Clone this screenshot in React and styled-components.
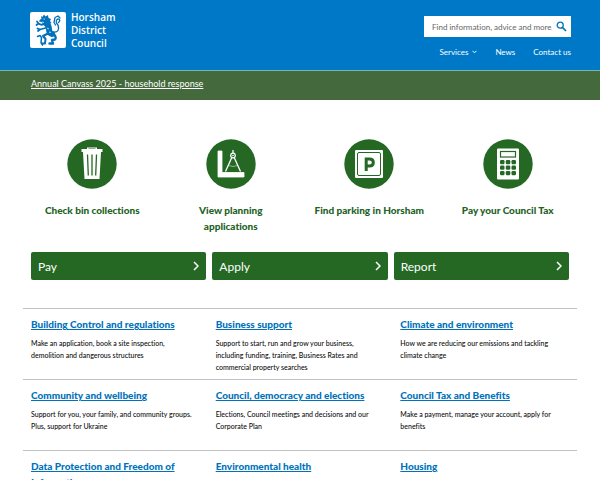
import React from "react";
import styled, { createGlobalStyle } from "styled-components";

const GlobalStyle = createGlobalStyle`
  * { box-sizing: border-box; }
  body {
    margin: 0;
    background: #fff;
    color: #0b0c0c;
    font-family: Lato, "Liberation Sans", sans-serif;
    font-size: 8px;
    line-height: 12px;
    font-variant-ligatures: none;
  }
  a { color: inherit; }
`;

const Header = styled.header`
  background: #0078c8;
  border-bottom: 1px solid #74b6b0;
`;

const HeaderInner = styled.div`
  display: flex;
  justify-content: space-between;
  padding: 11px 29px 12px 30px;
`;

const Logo = styled.a`
  display: flex;
  align-self: flex-start;
  gap: 5px;
  color: #fff;
  text-decoration: none;
  font: 600 10px/13px "Open Sans", "Noto Sans", sans-serif;
  svg { display: block; margin-top: 1px; }
  span { display: block; }
`;

const HeaderTools = styled.div`
  display: flex;
  flex-direction: column;
  align-items: flex-end;
  gap: 9px;
  padding-top: 5px;
`;

const Search = styled.form`
  display: flex;
  width: 147px;
  height: 21px;
  background: #fff;
`;

const SearchInput = styled.input`
  flex: 1;
  min-width: 0;
  padding: 0 0 0 8px;
  border: 0;
  background: transparent;
  font: inherit;
  color: #333;
  &::placeholder { color: #666; opacity: 1; }
`;

const SearchButton = styled.button`
  display: grid;
  place-items: center;
  width: 19px;
  padding: 0;
  border: 0;
  background: transparent;
  color: #0072bc;
`;

const Nav = styled.nav`
  display: flex;
  gap: 18px;
  color: #fff;
  a {
    display: flex;
    align-items: center;
    gap: 4px;
    text-decoration: none;
  }
`;

const Notice = styled.div`
  padding: 6px 31px 9px;
  background: #44693d;
  color: #fff;
  font-size: 9px;
  line-height: 14px;
`;

const Main = styled.main`
  padding: 39px 23px 0;
`;

const QuickLinks = styled.div`
  display: grid;
  grid-template-columns: repeat(4, 1fr);
`;

const QuickLink = styled.a`
  display: flex;
  flex-direction: column;
  align-items: center;
  gap: 13px;
  padding: 0 12px;
  color: #23621f;
  font-size: 10px;
  font-weight: 900;
  line-height: 16px;
  text-align: center;
  text-decoration: none;
`;

const ActionRow = styled.div`
  display: grid;
  grid-template-columns: repeat(3, 1fr);
  gap: 6px;
  padding: 18px 8px 28px;
`;

const Action = styled.button`
  display: flex;
  align-items: center;
  justify-content: space-between;
  height: 28px;
  padding: 0 7px;
  border: 0;
  border-radius: 2px;
  background: #246824;
  color: #fff;
  font-family: inherit;
  font-size: 12px;
`;

const Topics = styled.div`
  display: grid;
  grid-template-columns: repeat(3, 1fr);
`;

const Topic = styled.section`
  min-height: 71px;
  padding: 7px 8px 6px;
  border-top: 1px solid #bfc1c3;
  h2 {
    margin: 0 0 5px;
    color: #0072bc;
    font-size: 10px;
    font-weight: 900;
    line-height: 16px;
  }
  p {
    margin: 0;
    padding-right: 6px;
    font-size: 7px;
    font-weight: 500;
  }
`;

const Lion = () => (
  <svg width="36" height="36" viewBox="0 0 36 36" aria-hidden="true">
    <rect width="36" height="36" rx="2" fill="#fff" />
    <g fill="none" stroke="#0072bc" strokeLinecap="round" strokeLinejoin="round">
      <path d="M15.500 11q3.500 2 3.500 6t3 5" strokeWidth="6" />
      <path d="M14 11.500q-2 2.500-5.500 0L7 9.500M8.500 11.500L6.500 13M15.500 16l-5.500 1.500-2.500-1M10 17.500L8 19" strokeWidth="1.800" />
      <path d="M23 21q4 4.500 2 6.500l-3 .5 1 3.500h-3.500" strokeWidth="2.400" />
      <path d="M18 21.500l-5 2.500 2.500 3-.5 4.500h-3" strokeWidth="2" />
      <path d="M7.500 24.500l2.500-1 1.500 2-.5 5 1.500 2.500" strokeWidth="1.500" />
      <path d="M23 20q5 .5 5.500-3t-2-6q-1-3.500 2-4 2.500 1 0 3.500M25.500 13L24 10.500l1-5 3-1.500 2 2" strokeWidth="1.300" />
    </g>
    <path d="M11 4l1.500 1L14 2.500l1.500 2L18 3l.5 3 2.500 1-1 2 1.500 2-2 1-5.500.5-2.500-2.500-2.500-.5 1-2 1.500-.5z" fill="#0072bc" />
    <path d="M13.500 7h1.500M12 10l2 .5M17 16l2 1M19 20l2 .5" stroke="#fff" strokeWidth=".7" />
  </svg>
);

const SearchIcon = () => (
  <svg width="11" height="11" viewBox="0 0 11 11" fill="none" stroke="currentColor" aria-hidden="true">
    <circle cx="4.2" cy="4.2" r="3" strokeWidth="1.3" />
    <path d="M6.5 6.5L10 10" strokeWidth="1.7" />
  </svg>
);

const Chevron = ({ down }) =>
  down ? (
    <svg width="5" height="4" viewBox="0 0 5 4" fill="none" stroke="currentColor" aria-hidden="true">
      <path d="M.5 .8l2 2 2-2" />
    </svg>
  ) : (
    <svg width="6" height="10" viewBox="0 0 6 10" fill="none" stroke="currentColor" strokeWidth="1.5" aria-hidden="true">
      <path d="M1 1l4 4-4 4" />
    </svg>
  );

const glyphs = {
  bin: (
    <>
      <path d="M20 10V8.500h10V10h5.500v3H34l-1.500 27h-15L16 13h-1.500v-3zM21.500 10h7v-.5h-7z" fill="#fff" />
      <path d="M20.500 15.500l.8 21M25 15.500v21M29.500 15.500l-.8 21" stroke="#246824" strokeWidth="1.300" fill="none" />
    </>
  ),
  plan: (
    <>
      <path d="M12 12h4v21.500h22V38H12z" fill="#fff" stroke="#fff" strokeWidth=".8" strokeLinejoin="round" />
      <g fill="none" stroke="#fff">
        <path d="M27 11v3M25.800 18.500L19.500 32.500M28.200 18.500L34.500 32.500" strokeWidth="1.300" />
        <path d="M22.500 26.500q4.500 2 9 0" strokeWidth=".5" />
        <circle cx="27" cy="16.500" r="2.300" strokeWidth="1.200" />
      </g>
      <circle cx="27" cy="16.500" r=".8" fill="#fff" />
    </>
  ),
  parking: (
    <>
      <rect x="11" y="11" width="28" height="28" rx="1" fill="#fff" />
      <rect x="13.500" y="13.500" width="23" height="23" rx="1.500" fill="none" stroke="#246824" />
      <path d="M22.200 32V20h3.300q3.800 0 3.800 3.500T25.500 27h-3.300" fill="none" stroke="#246824" strokeWidth="3" />
    </>
  ),
  calculator: (
    <>
      <rect x="14" y="9.500" width="22" height="31" rx="1" fill="#fff" />
      <rect x="17.500" y="12.500" width="15" height="5.500" fill="none" stroke="#246824" strokeWidth="1.200" />
      {[21, 26.5, 32].map((y) =>
        [17, 22.8, 28.5].map((x) => (
          <rect key={`${x}-${y}`} x={x} y={y} width="4.500" height="4.300" rx="1.200" fill="#246824" />
        ))
      )}
    </>
  ),
};

const RoundIcon = ({ name }) => (
  <svg width="50" height="50" viewBox="0 0 50 50" aria-hidden="true">
    <circle cx="25" cy="25" r="24.700" fill="#246824" />
    {glyphs[name]}
  </svg>
);

const quickLinks = [
  ["bin", "Check bin collections"],
  ["plan", "View planning applications"],
  ["parking", "Find parking in Horsham"],
  ["calculator", "Pay your Council Tax"],
];

const topics = [
  ["Building Control and regulations", "Make an application, book a site inspection, demolition and dangerous structures"],
  ["Business support", "Support to start, run and grow your business, including funding, training, Business Rates and commercial property searches"],
  ["Climate and environment", "How we are reducing our emissions and tackling climate change"],
  ["Community and wellbeing", "Support for you, your family, and community groups. Plus, support for Ukraine"],
  ["Council, democracy and elections", "Elections, Council meetings and decisions and our Corporate Plan"],
  ["Council Tax and Benefits", "Make a payment, manage your account, apply for benefits"],
  ["Data Protection and Freedom of Information", ""],
  ["Environmental health", ""],
  ["Housing", ""],
];

export default function App() {
  return (
    <>
      <GlobalStyle />
      <Header>
        <HeaderInner>
          <Logo href="#home">
            <Lion />
            <div>
              <span>Horsham</span>
              <span>District</span>
              <span>Council</span>
            </div>
          </Logo>
          <HeaderTools>
            <Search role="search">
              <SearchInput type="text" aria-label="Search" placeholder="Find information, advice and more..." />
              <SearchButton type="submit" aria-label="Search"><SearchIcon /></SearchButton>
            </Search>
            <Nav>
              <a href="#services">Services <Chevron down /></a>
              <a href="#news">News</a>
              <a href="#contact">Contact us</a>
            </Nav>
          </HeaderTools>
        </HeaderInner>
      </Header>
      <Notice><a href="#canvass">Annual Canvass 2025 - household response</a></Notice>
      <Main>
        <QuickLinks>
          {quickLinks.map(([icon, label]) => (
            <QuickLink key={icon} href={`#${icon}`}>
              <RoundIcon name={icon} />
              <span>{label}</span>
            </QuickLink>
          ))}
        </QuickLinks>
        <ActionRow>
          {["Pay", "Apply", "Report"].map((label) => (
            <Action key={label} type="button">{label}<Chevron /></Action>
          ))}
        </ActionRow>
        <Topics>
          {topics.map(([title, text]) => (
            <Topic key={title}>
              <h2><a href="#topic">{title}</a></h2>
              {text && <p>{text}</p>}
            </Topic>
          ))}
        </Topics>
      </Main>
    </>
  );
}
